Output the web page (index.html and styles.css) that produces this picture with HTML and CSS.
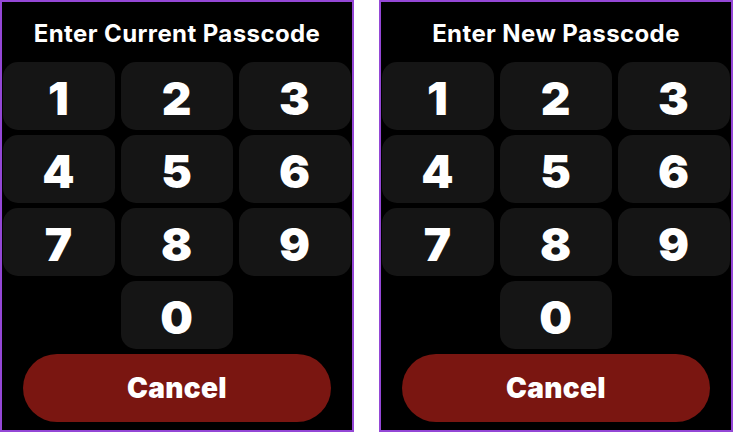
FILE: index.html
```html
<!DOCTYPE html>
<html lang="en">
<head>
  <meta charset="UTF-8">
  <title>Change Passcode</title>
  <link rel="stylesheet" href="styles.css">
</head>
<body>

  <div class="screens">

    <!-- Step 1: current passcode -->
    <div class="watch">
      <h1 class="title">Enter Current Passcode</h1>
      <div class="keypad">
        <button class="key">1</button>
        <button class="key">2</button>
        <button class="key">3</button>
        <button class="key">4</button>
        <button class="key">5</button>
        <button class="key">6</button>
        <button class="key">7</button>
        <button class="key">8</button>
        <button class="key">9</button>
        <button class="key zero">0</button>
      </div>
      <button class="cancel">Cancel</button>
    </div>

    <!-- Step 2: new passcode -->
    <div class="watch">
      <h1 class="title">Enter New Passcode</h1>
      <div class="keypad">
        <button class="key">1</button>
        <button class="key">2</button>
        <button class="key">3</button>
        <button class="key">4</button>
        <button class="key">5</button>
        <button class="key">6</button>
        <button class="key">7</button>
        <button class="key">8</button>
        <button class="key">9</button>
        <button class="key zero">0</button>
      </div>
      <button class="cancel">Cancel</button>
    </div>

  </div>

</body>
</html>
```

FILE: styles.css
```css
body {
  margin: 0;
  background-color: #fff;
  font-family: Inter, "Open Sans", sans-serif;
}
.screens {
  display: flex;
  gap: 25px;
}
.watch {
  width: 354px;
  height: 432px;
  box-sizing: border-box;
  border: 2px solid #9447d6;
  background: #000;
  display: flex;
  flex-direction: column;
  align-items: center;
}
.title {
  margin: 0;
  height: 60px;
  line-height: 63px;
  font-size: 24px;
  font-weight: 700;
  letter-spacing: 0.4px;
  color: #fff;
}
.keypad {
  display: grid;
  grid-template-columns: repeat(3, 112px);
  grid-auto-rows: 68px;
  gap: 5px 6px;
  margin-left: -1px;
}
.key {
  background: #151515;
  color: #fff;
  border: none;
  border-radius: 15px;
  font-family: inherit;
  font-size: 46px;
  font-weight: 900;
  padding: 0;
  padding-top: 4px;
}
.key.zero {
  grid-column: 2;
}
.cancel {
  margin-top: 5px;
  width: 308px;
  height: 68px;
  border: none;
  border-radius: 34px;
  background: #7a1611;
  color: #fff;
  font-family: inherit;
  font-size: 28px;
  font-weight: 900;
  letter-spacing: 0.3px;
}
```
